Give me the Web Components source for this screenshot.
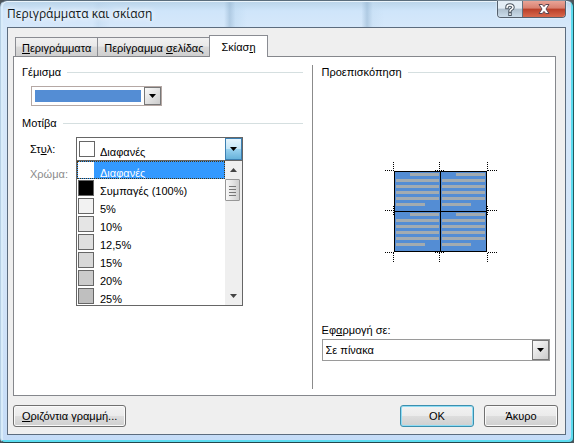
<!DOCTYPE html>
<html lang="el">
<head>
<meta charset="utf-8">
<title>Περιγράμματα και σκίαση</title>
<style>
  html { height: 100%; background: #4d565c; }
  body { margin: 0; height: 100%; font: 11px/14px "Liberation Sans", Arial, sans-serif; color: #000; }
</style>
</head>
<body>
<shading-dialog></shading-dialog>

<script>
const define = (name, html, setup) => {
  const template = document.createElement('template');
  template.innerHTML = '<style>*,:host{box-sizing:border-box}[hidden]{display:none}</style>' + html;
  customElements.define(name, class extends HTMLElement {
    constructor() {
      super();
      this.attachShadow({ mode: 'open' }).append(template.content.cloneNode(true));
    }
    connectedCallback() { if (setup) setup(this, this.shadowRoot); }
  });
};

/* Window frame with caption and caption buttons */
define('window-frame', `
<style>
  :host { display: flex; flex-direction: column; min-height: 100vh; padding: 2px 7px 7px 6px;
    border: 1px solid #5b6d7c; border-left-color: #b5cfe4; border-right-color: #24595e; border-bottom-color: #24474c; border-radius: 7px 7px 5px 5px;
    box-shadow: inset -2px -2px #5cdcf0, inset 0 1px #eaf4fb, inset 2px 0 #d9ecfa;
    background:
      linear-gradient(90deg, transparent 16%, #b3cfe855 17%, transparent 19%, transparent 39%, #93b3cf88 40%, #b9d6ee66 41%, transparent 43%, transparent 63%, #93b3cf88 64%, #c3dcf166 65%, transparent 67%) 0 0 / 100% 26px no-repeat,
      linear-gradient(#b9d3e8, #cfe5fa 10px, #d6e8fa 27px, #d4e5f8 60%, #c5dcf7); }
  header { display: flex; align-items: flex-start; height: 24px; }
  h1 { margin: 0; flex: 1; font: 12px/22px "Open Sans", "Noto Sans", sans-serif; color: #101820; text-shadow: 0 0 5px #fff, 0 0 8px #fff; }
  .caption { display: flex; height: 17px; margin-top: -2px; border: 1px solid #55616e; border-top: 0; border-radius: 0 0 4px 4px; overflow: hidden; box-shadow: 0 0 2px #fff; }
  button { display: grid; place-items: center; margin: 0; padding: 0; border: 0; height: 16px; }
  .help { width: 25px; background: linear-gradient(#e3edf5 45%, #aebfcd 50%, #cbdcea); border-right: 1px solid #65717e; }
  .close { width: 42px; background: linear-gradient(#e9a497, #d9806f 45%, #b93f29 50%, #d9694d); }
  main { flex: 1; display: flex; flex-direction: column; border: 1px solid #5c6c7e; background: #efefef; padding: 7px 9px 7px 5px; }
</style>
<header><h1><slot name="caption"></slot></h1>
  <div class="caption">
    <button class="help" aria-label="Βοήθεια"><svg width="12" height="13" viewBox="0 0 12 13" fill="none" stroke-linecap="square"><g stroke="#4d5863" stroke-width="3.500"><path d="M3 4.400C3 1.200 9 1.200 9 4.300C9 6.400 6 6.200 6 8M6 11v.2"/></g><g stroke="#fff" stroke-width="1.500"><path d="M3 4.400C3 1.200 9 1.200 9 4.300C9 6.400 6 6.200 6 8M6 11v.2"/></g></svg></button>
    <button class="close" aria-label="Κλείσιμο"><svg width="14" height="12" viewBox="0 0 14 12"><path d="M2 1.500h3.300L7 3.600l1.700-2.100H12L9 6l3 4.500H8.700L7 8.400l-1.700 2.100H2L5 6z" fill="#fff" stroke="#5d4650" stroke-width="1"/></svg></button>
  </div>
</header>
<main><slot></slot></main>`);

define('dialog-tab', `
<style>
  :host { display: block; margin-right: -1px; }
  button { display: block; font: inherit; color: inherit; height: 19px; margin: 0; padding: 1px 6px 0; border: 1px solid #8a8c92; border-bottom: 0;
    background: linear-gradient(#f1f1f1, #e9e9e9 45%, #dadada 50%, #cfcfcf); }
  :host([selected]) { position: relative; margin-bottom: -1px; }
  :host([selected]) button { height: 22px; background: #fff; padding: 0 11px; }
</style>
<button role="tab"><slot></slot></button>`, (host, root) => {
  root.querySelector('button').setAttribute('aria-selected', host.hasAttribute('selected'));
});

define('group-heading', `
<style>
  :host { display: flex; align-items: center; gap: 6px; height: 14px; }
  h2 { margin: 0; font: inherit; }
  i { flex: 1; height: 1px; background: #d5dfe0; }
</style>
<h2><slot></slot></h2><i></i>`);

/* Flat arrow button drawn at the end of drop-downs */
define('drop-arrow', `
<style>
  :host { display: grid; place-items: center; width: 17px; pointer-events: none; border: 1px solid #777; background: linear-gradient(135deg, #fafafa, #ccc); }
  :host([hot]) { border-color: #3c7fb1; background: linear-gradient(#e5f4fc, #c4e5f6 48%, #98d1ef 52%, #68b3db); }
</style>
<svg width="7" height="4" viewBox="0 0 7 4"><path d="M0 0h7L3.500 4z"/></svg>`);

/* Labelled <select>; the swatch attribute draws a colour beside the value */
define('select-field', `
<style>
  :host { display: flex; align-items: center; }
  :host([stacked]) { flex-direction: column; align-items: stretch; gap: 2px; }
  label { width: 46px; }
  :host([stacked]) label { width: auto; }
  :host([unlabelled]) label { display: none; }
  .box { display: grid; grid-template-columns: 1fr auto; height: 22px; width: 167px; border: 1px solid #9a9a9a; background: #fff; }
  :host([stacked]) .box { width: auto; }
  :host([fill]) .box { width: 131px; height: 20px; border-color: #b5a8a4; }
  :host([swatch]) .box { height: 24px; border-color: #666; }
  select, drop-arrow, .chip { grid-row: 1; }
  select { grid-column: 1 / 3; appearance: none; min-width: 0; border: 0; margin: 0; padding: 0 20px 0 3px; outline: 0; font: inherit; color: inherit; background: transparent; }
  :host([swatch]) select { padding: 5px 20px 0 23px; }
  drop-arrow { grid-column: 2; }
  .chip { display: none; grid-column: 1; align-self: center; pointer-events: none; }
  :host([fill]) .chip { display: block; height: 12px; margin: 0 3px; background: #548dd4; }
  :host([swatch]) .chip { display: block; width: 16px; height: 16px; margin-left: 2px; border: 1px solid #666; background: #fff; }
</style>
<label for="s"><slot name="label"></slot></label>
<div class="box"><span class="chip"></span><select id="s"></select><drop-arrow></drop-arrow></div>`, (host, root) => {
  const select = root.querySelector('select');
  const value = host.getAttribute('value') || '';
  select.append(new Option(value, value || 'color'));
  if (host.hasAttribute('name')) select.setAttribute('aria-label', host.getAttribute('name'));
  root.querySelector('drop-arrow').toggleAttribute('hot', host.hasAttribute('swatch'));
});

/* Opened list of fill patterns */
define('pattern-list', `
<style>
  :host { display: grid; grid-template-columns: 1fr 17px; border: 1px solid #666; border-top: 0; background: #fff; }
  ul { margin: 0; padding: 0; list-style: none; }
  li { display: flex; align-items: center; height: 18px; gap: 6px; padding-left: 1px; }
  li span { padding-top: 5px; }
  li i { width: 16px; height: 16px; border: 1px solid #666; }
  li[aria-selected=true] { background: #3399ff; color: #fff; outline: 1px dotted #4a3410; outline-offset: -1px; }
  li[aria-selected=true] i { border-color: #fff; }
  .bar { display: flex; flex-direction: column; background: #efefef; }
  .bar button { display: grid; place-items: center; height: 18px; padding: 0; border: 0; background: none; }
  .thumb { display: grid; place-items: center; width: 15px; height: 22px; border: 1px solid #979797; border-radius: 1px; background: linear-gradient(90deg, #f8f8f8, #e4e4e4 50%, #cfcfcf); }
  .space { flex: 1; }
</style>
<ul role="listbox" aria-label="Στυλ"></ul>
<div class="bar">
  <button aria-label="Επάνω"><svg width="7" height="4"><path d="M0 4L3.500 0L7 4z" fill="#444"/></svg></button>
  <div class="thumb"><svg width="7" height="11"><path d="M0 1.500h7M0 4.500h7M0 7.500h7M0 10.500h7" stroke="#777"/></svg></div>
  <div class="space"></div>
  <button aria-label="Κάτω"><svg width="7" height="4"><path d="M0 0h7L3.500 4z" fill="#444"/></svg></button>
</div>`, (host, root) => {
  const items = [['Διαφανές', '#fff'], ['Συμπαγές (100%)', '#000'], ['5%', '#f2f2f2'], ['10%', '#e5e5e5'],
    ['12,5%', '#dfdfdf'], ['15%', '#d8d8d8'], ['20%', '#cbcbcb'], ['25%', '#bfbfbf']];
  root.querySelector('ul').innerHTML = items.map(([text, color], n) =>
    `<li role="option" aria-selected="${n === 0}"><i style="background:${color}"></i><span>${text}</span></li>`).join('');
});

define('table-preview', `
<style>:host { display: block; } svg { display: block; }</style>
<svg width="112" height="100" viewBox="0 0 112 100" shape-rendering="crispEdges" role="img" aria-label="Προεπισκόπηση πίνακα">
  <defs><g id="t" fill="#a3abb0"><path d="M16 2h29v3h-29zM2 8h43v3H2zM2 14h43v3H2zM2 20h43v3H2zM2 26h43v3H2zM2 32h29v3H2z"/></g></defs>
  <rect x="9" y="9" width="93" height="81" fill="#548dd4"/>
  <use href="#t" x="9" y="9"/><use href="#t" x="55" y="9"/><use href="#t" x="9" y="49"/><use href="#t" x="55" y="49"/>
  <path d="M9.500 9.500h92v80h-92zM55.500 9v81M9 49.500h93" fill="none" stroke="#000"/>
  <path d="M8.500 0v9M54.500 0v9M102.500 0v9M8.500 91v9M54.500 91v9M102.500 91v9M0 8.500h9M103 8.500h9M0 48.500h9M103 48.500h9M0 90.500h9M103 90.500h9M50 8.500h9M50 90.500h9M8.500 44v9M102.500 44v9" stroke="#000" stroke-dasharray="1 1"/>
</svg>`);

define('push-button', `
<style>
  :host { display: block; min-width: 74px; }
  button { width: 100%; height: 22px; margin: 0; padding: 0 8px; font: inherit; color: inherit; border: 1px solid #707070; border-radius: 3px;
    box-shadow: inset 0 0 0 1px #fafafa; background: linear-gradient(#f2f2f2, #ebebeb 48%, #dddddd 52%, #cfcfcf); }
  :host([primary]) button { border-color: #3c8fae; box-shadow: inset 0 0 0 1px #8fdcf4; }
</style>
<button><slot></slot></button>`);

define('shading-dialog', `
<style>
  :host { display: block; }
  .tabs { display: flex; align-items: flex-end; padding: 0 2px; }
  .panel { flex: 1; display: grid; grid-template-columns: 55fr 45fr; border: 1px solid #85878c; background: #fff; padding: 8px 0 6px; }
  .left { padding: 0 9px 0 8px; }
  .fields { padding: 7px 0 10px 9px; }
  .fields.style { padding: 7px 0 0 8px; }
  .anchor { position: relative; }
  pattern-list { position: absolute; top: 100%; left: 46px; width: 167px; }
  .off { color: #8b8b8b; margin-top: 6px; }
  .right { display: flex; flex-direction: column; border-left: 1px solid #8b8b8b; padding: 0 5px 28px 9px; }
  .preview { flex: 1; display: grid; place-items: center; padding: 22px 0 0 10px; }
  footer { display: flex; justify-content: flex-end; gap: 10px; padding-top: 9px; margin-right: -2px; }
  .line { margin-right: auto; }
</style>
<window-frame>
  <span slot="caption">Περιγράμματα και σκίαση</span>
  <div class="tabs" role="tablist">
    <dialog-tab><u>Π</u>εριγράμματα</dialog-tab>
    <dialog-tab>Περίγραμμα <u>σ</u>ελίδας</dialog-tab>
    <dialog-tab selected>Σκίασ<u>η</u></dialog-tab>
  </div>
  <div class="panel">
    <section class="left">
      <group-heading>Γέμισμα</group-heading>
      <div class="fields"><select-field fill unlabelled name="Γέμισμα"></select-field></div>
      <group-heading>Μοτίβα</group-heading>
      <div class="fields style">
        <div class="anchor">
          <select-field swatch value="Διαφανές"><span slot="label">Στ<u>υ</u>λ:</span></select-field>
          <pattern-list></pattern-list>
        </div>
        <div class="off">Χρώμα:</div>
      </div>
    </section>
    <section class="right">
      <group-heading>Προεπισκόπηση</group-heading>
      <div class="preview"><table-preview></table-preview></div>
      <select-field stacked value="Σε πίνακα"><span slot="label">Εφ<u>α</u>ρμογή σε:</span></select-field>
    </section>
  </div>
  <footer>
    <push-button class="line"><u>Ο</u>ριζόντια γραμμή...</push-button>
    <push-button primary>OK</push-button>
    <push-button>Άκυρο</push-button>
  </footer>
</window-frame>`);
</script>
</body>
</html>
